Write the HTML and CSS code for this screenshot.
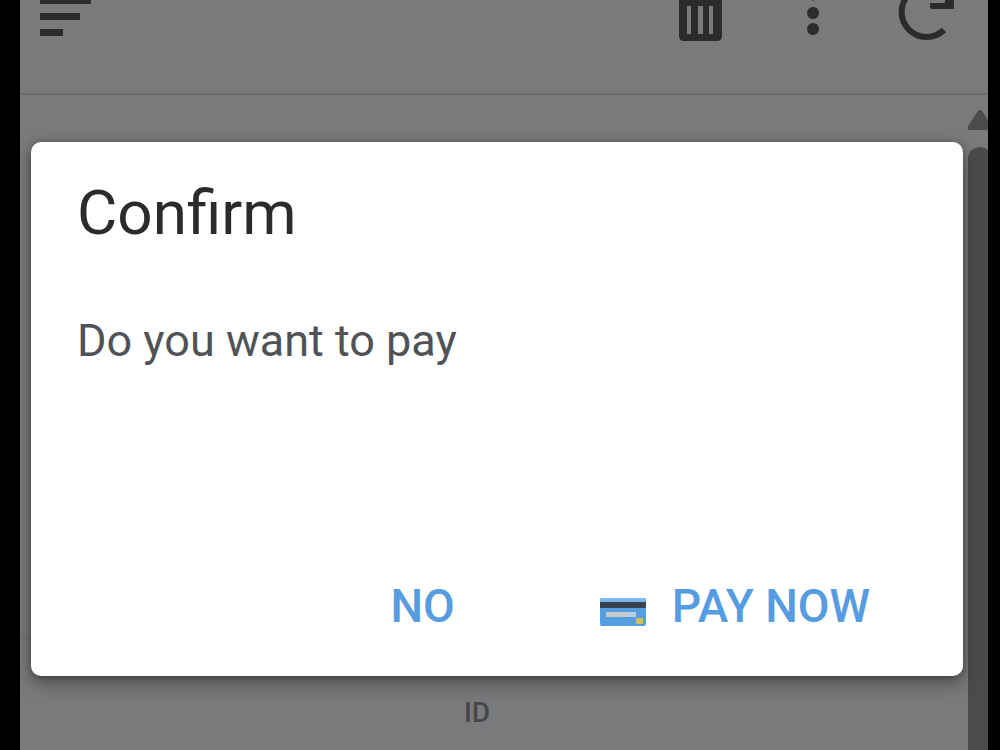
FILE: index.html
```
<!DOCTYPE html>
<html lang="en">
<head>
  <meta charset="UTF-8" />
  <meta name="viewport" content="width=device-width, initial-scale=1.0"/>
  <title>Confirm</title>
  <link rel="stylesheet" href="styles.css">
</head>
<body>

<div class="screen">

  <!-- Toolbar -->
  <header class="toolbar">
    <button type="button" class="icon-btn menu" aria-label="Menu">
      <svg width="52" height="44" viewBox="0 0 52 44">
        <path d="M0 0h51v4H0zM0 13h40v7H0zM0 29h23v7H0z"/>
      </svg>
    </button>
    <button type="button" class="icon-btn" aria-label="Delete">
      <svg width="52" height="44" viewBox="0 0 52 44">
        <path fill-rule="evenodd" d="M5 0h43v36q0 5-5 5H10q-5 0-5-5zM13 6v28h4V6zM24 6v28h5V6zM35 6v28h4V6z"/>
      </svg>
    </button>
    <button type="button" class="icon-btn" aria-label="More">
      <svg width="18" height="44" viewBox="0 0 18 44">
        <circle cx="11" cy="-4.5" r="5"/>
        <circle cx="11" cy="13" r="6"/>
        <circle cx="11" cy="29" r="6"/>
      </svg>
    </button>
    <button type="button" class="icon-btn" aria-label="Refresh">
      <svg width="60" height="44" viewBox="0 0 60 44">
        <path class="arc" d="M48 30A25 25 0 1 1 48 -6"/>
        <path d="M34 3h15v-3h9v9H36q-2 0-2-2z"/>
      </svg>
    </button>
  </header>

  <!-- Page behind the dialog -->
  <main class="content">
    <table class="list">
      <thead>
        <tr><th>ID</th></tr>
      </thead>
    </table>
    <div class="scrollbar">
      <svg class="arrow" width="24" height="20" viewBox="0 0 24 20">
        <path d="M10 1q2-2 4 0l10 15q1 4-2 4H2q-3 0-2-4z"/>
      </svg>
      <div class="thumb"></div>
    </div>
  </main>

  <!-- Confirm dialog -->
  <div class="overlay">
    <div class="dialog" role="dialog" aria-labelledby="dialogTitle">
      <h2 id="dialogTitle">Confirm</h2>
      <p>Do you want to pay</p>
      <div class="actions">
        <button type="button" class="btn">NO</button>
        <button type="button" class="btn">
          <svg width="46" height="30" viewBox="0 0 46 30">
            <rect width="46" height="28" rx="2" fill="#559fe0"/>
            <rect width="46" height="4" rx="2" fill="#7ab8ee"/>
            <rect y="4" width="46" height="6" fill="#38434f"/>
            <rect x="6" y="14" width="30" height="5" fill="#b9cfe3"/>
            <rect x="6" y="14" width="21" height="5" fill="#c6c8cb"/>
            <rect x="36" y="20" width="7" height="6" rx="1" fill="#d2bd5d"/>
          </svg>
          PAY NOW
        </button>
      </div>
    </div>
  </div>

</div>

</body>
</html>
```
FILE: styles.css
```
* {
  box-sizing: border-box;
}

body {
  margin: 0;
  padding: 0 12px 0 20px;
  background: #000;
  font-family: Roboto, "Liberation Sans", sans-serif;
}

button {
  padding: 0;
  border: none;
  background: none;
  font-family: inherit;
  cursor: pointer;
}

svg {
  display: block;
}

.screen {
  position: relative;
  display: flex;
  flex-direction: column;
  min-height: 100vh;
  background: #797a7c;
}

.toolbar {
  display: flex;
  gap: 76px;
  padding: 0 32px 49px 20px;
  border-bottom: 2px solid #6a6b6d;
}

.icon-btn {
  fill: #2b2b2d;
}

.icon-btn .arc {
  fill: none;
  stroke: #2b2b2d;
  stroke-width: 6;
}

.menu {
  margin-right: auto;
}

.content {
  flex: 1;
  display: flex;
  align-items: flex-end;
}

.list {
  flex: 1;
  height: 113px;
  border-collapse: collapse;
  border-top: 2px solid #737476;
}

.list th {
  padding: 36px 34px 0 0;
  font-size: 28px;
  line-height: 32px;
  font-weight: 500;
  color: #444649;
}

.scrollbar {
  align-self: stretch;
  display: flex;
  flex-direction: column;
  gap: 17px;
  width: 20px;
  padding-top: 15px;
  overflow: hidden;
}

.arrow {
  flex: none;
  fill: #4b4b4d;
}

.thumb {
  flex: 1;
  width: 24px;
  border-radius: 12px 12px 0 0;
  background: #4b4b4d;
}

.overlay {
  position: absolute;
  inset: 0;
  display: flex;
  padding: 142px 25px 74px 11px;
}

.dialog {
  flex: 1;
  display: flex;
  flex-direction: column;
  padding: 35px 80px 34px 46px;
  border-radius: 10px;
  background: #fff;
  box-shadow: 0 8px 20px rgba(0, 0, 0, 0.3), 0 2px 8px rgba(0, 0, 0, 0.3);
}

h2 {
  margin: 0;
  font-size: 62px;
  line-height: 72px;
  font-weight: 400;
  color: #2b2b2d;
}

p {
  margin: 64px 0 0;
  font-size: 45px;
  line-height: 56px;
  color: #505256;
}

.actions {
  display: flex;
  justify-content: flex-end;
  gap: 132px;
  margin-top: auto;
}

.btn {
  display: flex;
  align-items: center;
  gap: 26px;
  padding: 0 13px 0 0;
  font-size: 46px;
  line-height: 72px;
  font-weight: 500;
  color: #559de0;
}

.btn svg {
  margin-top: 14px;
}
```
